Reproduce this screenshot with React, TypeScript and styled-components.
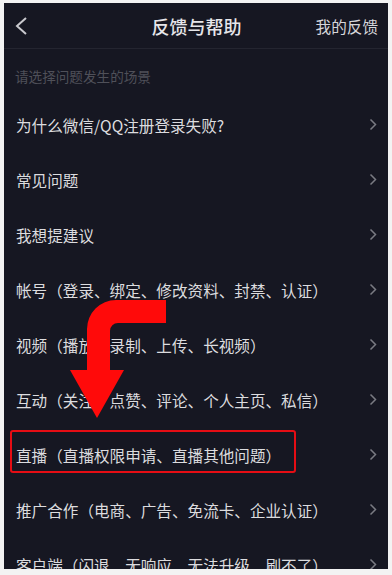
import styled, { createGlobalStyle } from 'styled-components';

const GlobalStyle = createGlobalStyle`
  html, body {
    margin: 0;
    padding: 0;
    background: #f3f3f3;
    height: 575px;
    overflow: hidden;
  }
`;

const Frame = styled.div`
  padding: 3px 4px 0 4px;
  height: 575px;
  box-sizing: border-box;
`;

const Screen = styled.div`
  position: relative;
  height: 566px;
  overflow: hidden;
  background: #161722;
  font-family: 'Noto Sans CJK SC', 'Noto Sans', sans-serif;
  color: #dedee2;
`;

const Header = styled.header`
  display: grid;
  grid-template-columns: 1fr auto 1fr;
  align-items: center;
  height: 45px;
  padding: 0 10px 0 11px;
  border-bottom: 1px solid #242530;
`;

const BackButton = styled.button`
  justify-self: start;
  display: flex;
  padding: 0;
  border: 0;
  background: none;
  cursor: pointer;
`;

const Title = styled.h1`
  margin: 0;
  font-size: 18px;
  font-weight: 500;
  color: #e6e6ea;
  line-height: 1;
`;

const HeaderLink = styled.span`
  justify-self: end;
  font-size: 15.6px;
  color: #d6d6da;
`;

const Hint = styled.p`
  margin: 0;
  padding: 17px 12px 11px 11px;
  line-height: 20px;
  font-size: 13.6px;
  color: #4f5059;
`;

const List = styled.ul`
  list-style: none;
  margin: 0;
  padding: 0;
`;

const Row = styled.li`
  position: relative;
  display: flex;
  align-items: center;
  justify-content: space-between;
  height: 55px;
  padding: 0 11px 0 12px;
  font-size: 15.6px;
  color: #dcdcdf;
`;

const Highlight = styled.span`
  position: absolute;
  left: 6px;
  top: 3px;
  width: 282px;
  height: 39px;
  border: 2px solid #e50d14;
  border-radius: 3px;
  pointer-events: none;
`;

const Overlay = styled.svg`
  position: absolute;
  left: 0;
  top: 0;
  pointer-events: none;
`;

const items = [
  '为什么微信/QQ注册登录失败?',
  '常见问题',
  '我想提建议',
  '帐号（登录、绑定、修改资料、封禁、认证）',
  '视频（播放、录制、上传、长视频）',
  '互动（关注、点赞、评论、个人主页、私信）',
  '直播（直播权限申请、直播其他问题）',
  '推广合作（电商、广告、免流卡、企业认证）',
  '客户端（闪退、无响应、无法升级、刷不了）',
];

const Chevron = () => (
  <svg width="8" height="13" viewBox="0 0 8 13">
    <polyline points="1.5,1.5 6.5,6.5 1.5,11.5" fill="none" stroke="#7a7b83" strokeWidth="1.5" />
  </svg>
);

export default function App() {
  return (
    <>
      <GlobalStyle />
      <Frame>
        <Screen>
          <Header>
            <BackButton aria-label="返回">
              <svg width="14" height="20" viewBox="0 0 14 20">
                <polyline points="11,2 2,10 11,18" fill="none" stroke="#c9c9ce" strokeWidth="2" />
              </svg>
            </BackButton>
            <Title>反馈与帮助</Title>
            <HeaderLink>我的反馈</HeaderLink>
          </Header>
          <Hint>请选择问题发生的场景</Hint>
          <List>
            {items.map((text, i) => (
              <Row key={text}>
                <span>{text}</span>
                <Chevron />
                {i === 6 && <Highlight />}
              </Row>
            ))}
          </List>
          <Overlay width="384" height="566" viewBox="4 3 384 566">
            <path
              d="M166 300 L116 300 A29 29 0 0 0 87 329 L87 370 L70 370 L97 418 L124 370 L110 370 L110 331 A8 8 0 0 1 118 323 L166 323 Z"
              fill="#ff0a0a"
            />
          </Overlay>
        </Screen>
      </Frame>
    </>
  );
}
